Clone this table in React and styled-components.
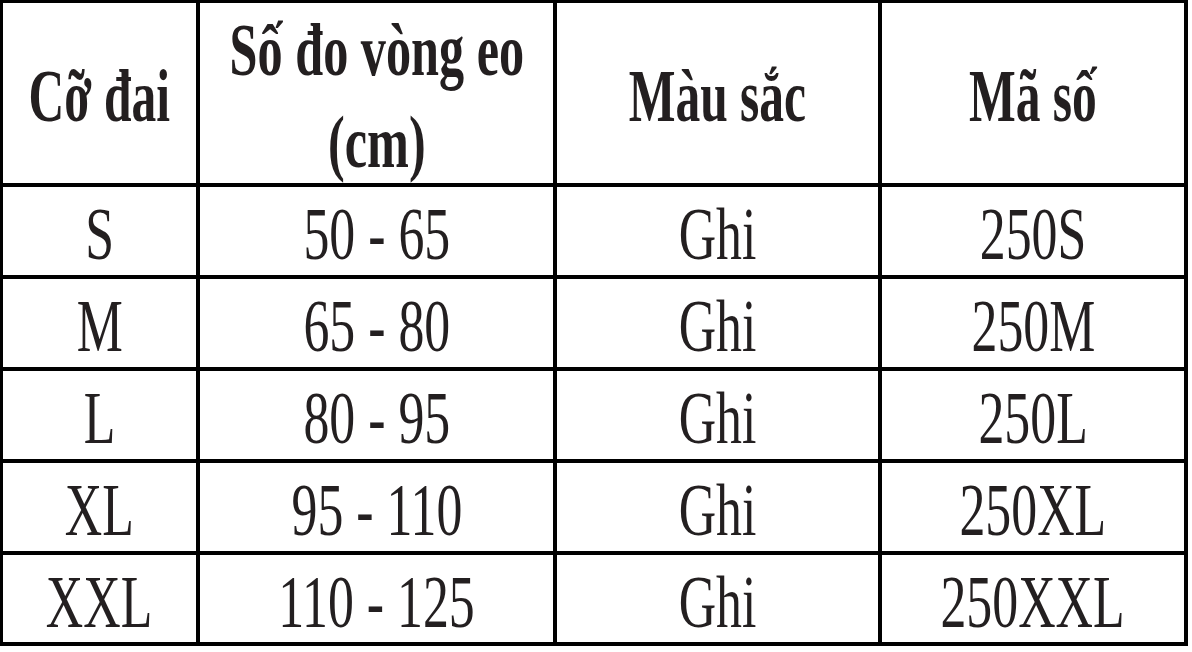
import React from "react";
import styled, { createGlobalStyle } from "styled-components";

const Global = createGlobalStyle`
  html, body { margin: 0; padding: 0; background: #ffffff; }
  body { width: 1192px; height: 652px; overflow: hidden; }
`;

const Table = styled.div`
  display: grid;
  width: 1188px;
  box-sizing: border-box;
  grid-template-columns: 193px 353px 321px 302px;
  grid-template-rows: 180px 88px 88px 88px 88px 87px;
  gap: 4px;
  padding: 3px 4px 4px 3px;
  background: #000000;
  font-family: "Liberation Serif", "Times New Roman", serif;
  color: #231f20;
`;

const Cell = styled.div`
  background: #ffffff;
  display: flex;
  align-items: center;
  justify-content: center;
  text-align: center;
  box-sizing: border-box;
  padding-top: ${(p) => (p.$head ? "6px" : "8px")};
  overflow: visible;
  min-width: 0;
  min-height: 0;
`;

const Text = styled.span`
  display: inline-block;
  white-space: nowrap;
  font-size: ${(p) => (p.$head ? "75px" : "74px")};
  font-weight: ${(p) => (p.$head ? 700 : 400)};
  line-height: ${(p) => (p.$head ? "92px" : "1.15")};
  transform: scaleX(${(p) => (p.$head ? 0.66 : 0.7)});
  transform-origin: center;
`;

const HeadBlock = styled.span`
  display: inline-block;
  text-align: center;
  font-size: 75px;
  font-weight: 700;
  line-height: 92px;
  white-space: nowrap;
  transform: scaleX(0.67);
  transform-origin: center;
  margin-top: -1px;
`;

const headers = ["Cỡ đai", null, "Màu sắc", "Mã số"];

const rows = [
  ["S", "50 - 65", "Ghi", "250S"],
  ["M", "65 - 80", "Ghi", "250M"],
  ["L", "80 - 95", "Ghi", "250L"],
  ["XL", "95 - 110", "Ghi", "250XL"],
  ["XXL", "110 - 125", "Ghi", "250XXL"],
];

export default function App() {
  return (
    <>
      <Global />
      <Table>
        {headers.map((h, i) =>
          h ? (
            <Cell key={"h" + i} $head>
              <Text $head>{h}</Text>
            </Cell>
          ) : (
            <Cell key={"h" + i} $head>
              <HeadBlock>
                Số đo vòng eo
                <br />
                (cm)
              </HeadBlock>
            </Cell>
          )
        )}
        {rows.map((r, ri) =>
          r.map((c, ci) => (
            <Cell key={ri + "-" + ci}>
              <Text>{c}</Text>
            </Cell>
          ))
        )}
      </Table>
    </>
  );
}
